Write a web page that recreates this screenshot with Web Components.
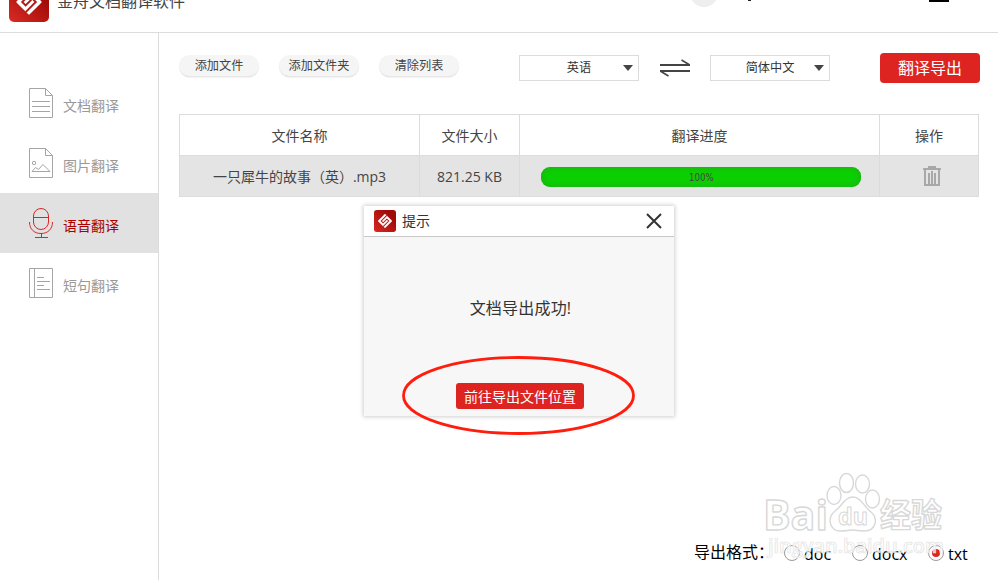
<!DOCTYPE html>
<html lang="zh-CN">
<head>
	<meta charset="utf-8">
	<title>金舟文档翻译软件</title>
	<style>
		body {
			margin: 0;
			width: 998px;
			height: 580px;
			overflow: hidden;
			background: #fff;
			color: #444;
			font-family: "Open Sans", "Noto Sans CJK SC", sans-serif;
			font-size: 14px;
		}
	</style>
</head>
<body>
	<translator-app></translator-app>

	<template id="app-logo">
		<style>
			:host { display: block; flex: none; width: var(--size, 22px); height: var(--size, 22px); }
			svg { display: block; width: 100%; height: 100%; }
		</style>
		<svg viewBox="0 0 40 40">
			<defs>
				<linearGradient id="g" x1="0" y1="1" x2="1" y2="0">
					<stop offset="0" stop-color="#d92a24"/>
					<stop offset=".75" stop-color="#a00b08"/>
				</linearGradient>
			</defs>
			<rect width="40" height="40" rx="5" fill="url(#g)"/>
			<g transform="translate(20 20) rotate(45)">
				<rect x="-9.2" y="-9.2" width="18.4" height="18.4" rx="1" fill="#fff"/>
				<path d="M-4.800 -9.500V4.800H0V-4.800H4.800V9.500" fill="none" stroke="#b01a15" stroke-width="1.9"/>
			</g>
		</svg>
	</template>

	<template id="app-header">
		<style>
			:host { display: flex; align-items: flex-start; height: 32px; border-bottom: 1px solid #dcdcdc; overflow: hidden; }
			app-logo { --size: 40px; margin: -18px 8px 0 9px; }
			.title { font-size: 16px; line-height: 24px; margin-top: -11px; flex: 1; color: #444; }
			.avatar { width: 28px; height: 28px; margin: -21px 30px 0 0; border-radius: 50%; background: #eee; }
			.tick { width: 3px; height: 1px; margin-right: 178px; background: #222; }
			.min { width: 20px; height: 2px; margin-right: 49px; background: #000; }
		</style>
		<app-logo></app-logo>
		<div class="title">金舟文档翻译软件</div>
		<div class="avatar"></div>
		<div class="tick"></div>
		<div class="min"></div>
	</template>

	<template id="nav-item">
		<style>
			:host { display: flex; align-items: center; height: 60px; padding-left: 29px; color: #999; }
			:host([active]) { background: #e1e1e1; color: #a90000; }
			::slotted(svg) { width: 24px; height: 30px; margin-right: 10px; fill: none; stroke: #a5a5a5; stroke-width: 1; }
			:host([active]) ::slotted(svg) { stroke: #dc2626; }
			.label { line-height: 20px; margin-top: 5px; }
		</style>
		<slot name="icon"></slot>
		<span class="label"><slot></slot></span>
	</template>

	<template id="side-nav">
		<style>
			:host { display: block; flex: none; width: 158px; padding-top: 40px; border-right: 1px solid #dcdcdc; }
		</style>
		<nav>
			<nav-item>
				<svg slot="icon" viewBox="0 0 24 30"><path d="M.5.5H16.5L23.5 7.5V29.5H.5ZM16.5.5V7.5H23.5M3 13.5H21M3 18.5H21M3 23.5H21"/></svg>文档翻译
			</nav-item>
			<nav-item>
				<svg slot="icon" viewBox="0 0 24 30"><path d="M.5.5H16.5L23.5 7.5V29.5H.5ZM16.5.5V7.5H23.5M3 23.5H21L14 16.5L9.5 21.5L6.5 19.5L3 23.5"/><circle cx="5" cy="15" r="1.7"/></svg>图片翻译
			</nav-item>
			<nav-item active>
				<svg slot="icon" viewBox="0 0 24 30"><rect x="4.5" y=".5" width="15" height="21" rx="7.5"/><path d="M4.5 9.5H19.5M.5 14C.5 21 5 25.5 12 25.5S23.5 21 23.5 14M12.5 25.5V29.5M6 29.5H19"/></svg>语音翻译
			</nav-item>
			<nav-item>
				<svg slot="icon" viewBox="0 0 24 30"><path d="M.5.5H23.5V29.5H.5ZM5.5.5V29.5M8 9.5H15M8 13.5H21M8 17.5H15M8 21.5H21"/></svg>短句翻译
			</nav-item>
		</nav>
	</template>

	<template id="pill-button">
		<style>
			:host { display: block; width: 80px; height: 21px; border-radius: 11px; background: #f5f5f5; box-shadow: 0 1.5px 1px #e6e6e6; font-size: 12.2px; line-height: 21px; text-align: center; color: #444; }
		</style>
		<slot></slot>
	</template>

	<template id="lang-select">
		<style>
			:host { display: flex; align-items: center; box-sizing: border-box; width: 120px; height: 26px; padding-right: 5px; border: 1px solid #dcdcdc; font-size: 12.2px; line-height: 24px; color: #333; }
			span { flex: 1; text-align: center; padding-left: 15px; }
			svg { display: block; width: 10px; height: 6px; fill: #444; }
		</style>
		<span><slot></slot></span>
		<svg viewBox="0 0 10 6"><path d="M0 0H10L5 6Z"/></svg>
	</template>

	<template id="tool-bar">
		<style>
			:host { display: flex; align-items: flex-start; height: 30px; }
			.pills { display: flex; gap: 20px; margin: 2px 60px 0 0; }
			.swap { width: 32px; height: 20px; margin: 5px 19px 0 20px; fill: none; stroke: #444; stroke-width: 2; }
			lang-select { margin-top: 2px; }
			.export { width: 100px; height: 30px; margin-left: 50px; border-radius: 4px; background: #dd2420; color: #fff; font-size: 16px; line-height: 31px; text-align: center; }
		</style>
		<div class="pills">
			<pill-button>添加文件</pill-button>
			<pill-button>添加文件夹</pill-button>
			<pill-button>清除列表</pill-button>
		</div>
		<lang-select>英语</lang-select>
		<svg class="swap" viewBox="0 0 32 20"><path d="M1 7H31M1 13H31"/><path d="M22.5 2L30 6.5M9.500 18L2 13.500" stroke-width="1.500"/></svg>
		<lang-select>简体中文</lang-select>
		<div class="export">翻译导出</div>
	</template>

	<template id="progress-bar">
		<style>
			:host { display: block; width: 320px; height: 20px; border-radius: 9px; background: #0bd000; box-shadow: inset 0 0 7px #20a91c; font: 10px/21px "DejaVu Sans", sans-serif; text-align: center; color: #444; }
			span { display: inline-block; transform: scaleX(.86); }
		</style>
		<span><slot></slot></span>
	</template>

	<template id="file-table">
		<style>
			:host { display: grid; grid-template-columns: 240px 100px 360px 99px; width: 799px; margin-top: 31px; border: solid #dcdcdc; border-width: 0 1px 1px 0; color: #444; }
			div { display: flex; box-sizing: border-box; align-items: center; justify-content: center; height: 41px; border: solid #dcdcdc; border-width: 1px 0 0 1px; }
			.cell { background: #e4e4e4; }
			.bar { padding: 2px 0 0 3px; }
			.del { padding: 0 0 0 5px; }
			svg { width: 18px; height: 20px; }
		</style>
		<div>文件名称</div>
		<div>文件大小</div>
		<div>翻译进度</div>
		<div>操作</div>
		<div class="cell">一只犀牛的故事（英）.mp3</div>
		<div class="cell">821.25 KB</div>
		<div class="cell bar"><progress-bar>100%</progress-bar></div>
		<div class="cell del">
			<svg viewBox="0 0 18 20" fill="none" stroke="#a8a8a8" stroke-width="2"><path d="M0 3H18M5 1H13M2 3V19H16V3M6 7V18M9 5V18M12 7V18"/></svg>
		</div>
	</template>

	<template id="radio-option">
		<style>
			:host { display: flex; align-items: center; font-size: 16px; line-height: 22px; color: #000; }
			i { display: flex; align-items: center; justify-content: center; box-sizing: border-box; width: 16px; height: 16px; margin: -2px 4px 0 0; border: 1px solid #999; border-radius: 50%; }
			:host([checked]) i::before { content: ""; width: 8px; height: 8px; border-radius: 50%; background: #dd2420; }
		</style>
		<i></i><slot></slot>
	</template>

	<template id="format-picker">
		<style>
			:host { display: flex; align-items: center; margin: auto 0 15px 515px; height: 24px; font-size: 16px; line-height: 22px; color: #000; }
			.label { width: 90px; margin-top: -2px; }
			radio-option { margin-top: 2px; }
			.doc { width: 68px; }
			.docx { width: 76px; }
		</style>
		<span class="label">导出格式：</span>
		<radio-option class="doc">doc</radio-option>
		<radio-option class="docx">docx</radio-option>
		<radio-option checked>txt</radio-option>
	</template>

	<template id="tip-dialog">
		<style>
			:host { display: flex; flex-direction: column; width: 310px; height: 210px; background: #f7f7f7; box-shadow: 0 0 4px 1px #d0d0d0; color: #333; }
			header { display: flex; align-items: center; height: 30px; padding: 0 12px 0 10px; border-bottom: 1px solid #c8c8c8; background: #fff; }
			header span { flex: 1; padding-left: 6px; line-height: 20px; }
			.close { width: 16px; height: 16px; fill: none; stroke: #333; stroke-width: 2; }
			.body { flex: 1; display: flex; flex-direction: column; align-items: center; color: #333; }
			.msg { margin: 59px 0 0 3px; font-size: 16px; line-height: 24px; letter-spacing: .2px; }
			.go { width: 128px; height: 26px; margin: 63px 0 0 2px; border-radius: 3px; background: #dd2420; color: #fff; line-height: 27px; text-align: center; }
		</style>
		<header>
			<app-logo></app-logo>
			<span><slot name="title"></slot></span>
			<svg class="close" viewBox="0 0 16 16"><path d="M1 1L15 15M15 1L1 15"/></svg>
		</header>
		<div class="body">
			<div class="msg"><slot></slot></div>
			<div class="go"><slot name="action"></slot></div>
		</div>
	</template>

	<template id="baidu-mark">
		<style>
			:host { display: block; width: 190px; height: 90px; }
			svg { display: block; overflow: visible; fill: #fff; stroke: #d8d8d8; stroke-width: 1.4; stroke-linejoin: round; }
			text { font-family: "Open Sans", "Noto Sans CJK SC", sans-serif; font-weight: bold; }
		</style>
		<svg width="190" height="90" viewBox="760 470 190 90">
			<text x="763" y="529.500" font-size="41" textLength="65" lengthAdjust="spacingAndGlyphs" font-weight="800">Bai</text>
			<ellipse cx="834" cy="495.500" rx="7" ry="9"/>
			<ellipse cx="846.500" cy="483" rx="7" ry="9.500"/>
			<ellipse cx="862.500" cy="484" rx="7" ry="9"/>
			<ellipse cx="872.500" cy="499" rx="7" ry="9"/>
			<path d="M853 497C861 497 864 507 871 512C878 518 877 531 864 531C858 531 855 530 853 530C848 530 846 531 841 531C829 531 827 518 835 511C842 506 845 497 853 497Z"/>
			<text x="838" y="525" font-size="23" textLength="30" lengthAdjust="spacingAndGlyphs" stroke-width="1">du</text>
			<text x="880" y="527" font-size="33" textLength="62" lengthAdjust="spacingAndGlyphs">经验</text>
			<text x="768" y="553" font-size="20" textLength="176" lengthAdjust="spacingAndGlyphs" fill-opacity=".7" stroke="#e2e2e2" stroke-width=".7" style="font-weight: 600">jingyan.baidu.com</text>
		</svg>
	</template>

	<template id="translator-app">
		<style>
			:host { display: flex; flex-direction: column; position: relative; width: 998px; height: 580px; overflow: hidden; }
			.content { flex: 1; display: flex; min-height: 0; }
			main { flex: 1; display: flex; flex-direction: column; padding: 20px 0 0 20px; }
			tip-dialog { position: absolute; left: 364px; top: 206px; }
			.ring { position: absolute; left: 402px; top: 356px; width: 233px; height: 79px; fill: none; stroke: #ff1d0d; stroke-width: 2.800; }
			baidu-mark { position: absolute; left: 760px; top: 470px; }
		</style>
		<app-header></app-header>
		<div class="content">
			<side-nav></side-nav>
			<main>
				<tool-bar></tool-bar>
				<file-table></file-table>
				<format-picker></format-picker>
			</main>
		</div>
		<tip-dialog>
			<span slot="title">提示</span>
			文档导出成功!
			<span slot="action">前往导出文件位置</span>
		</tip-dialog>
		<svg class="ring" viewBox="0 0 233 79"><ellipse cx="116.500" cy="39.500" rx="115" ry="38"/></svg>
		<baidu-mark></baidu-mark>
	</template>

	<script>
		(function() {

			'use strict';

			// Every element just clones the template that has its own name
			class TemplateElement extends HTMLElement {
				constructor() {
					super();
					const t = document.getElementById(this.localName);
					this.attachShadow({mode: 'open'}).appendChild(t.content.cloneNode(true));
				}
			}

			document.querySelectorAll('template').forEach((t) => {
				customElements.define(t.id, class extends TemplateElement {});
			});

		})();
	</script>
</body>
</html>
